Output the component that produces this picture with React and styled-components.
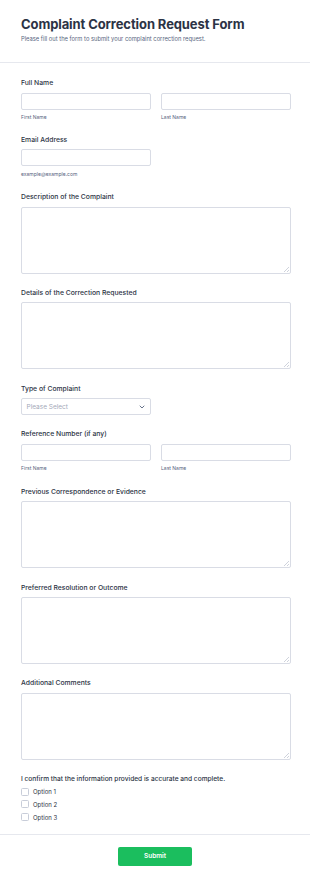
import React from "react";
import styled, { createGlobalStyle } from "styled-components";

const Global = createGlobalStyle`
  html, body { margin: 0; padding: 0; background: #fff; }
  body { font-family: Inter, "Noto Sans", "Liberation Sans", sans-serif; color: #2c3345; }
  * { box-sizing: border-box; }
`;

const Page = styled.div`
  width: 310px;
  min-height: 884px;
  background: #fff;
  display: flex;
  flex-direction: column;
`;

const Header = styled.header`
  padding: 16px 19px 19px 21px;
  border-bottom: 1px solid #e6e8ee;
`;

const Title = styled.h1`
  margin: 0;
  font-size: 13px;
  line-height: 17px;
  font-weight: 700;
  color: #2c3345;
  letter-spacing: -0.1px;
`;

const Subtitle = styled.p`
  margin: 2px 0 0;
  font-size: 5.8px;
  line-height: 8px;
  color: #57647e;
`;

const Body = styled.form`
  padding: 15px 19px 10px 21px;
  display: flex;
  flex-direction: column;
  gap: 14.3px;
  border-bottom: 1px solid #e6e8ee;
`;

const Field = styled.div`
  display: flex;
  flex-direction: column;
`;

const Label = styled.label`
  font-size: 6.8px;
  line-height: 10px;
  font-weight: 500;
  color: #2c3345;
  margin-bottom: ${(p) => (p.$tight ? 4 : 4.5)}px;
`;

const Row = styled.div`
  display: grid;
  grid-template-columns: 1fr 1fr;
  column-gap: 10px;
`;

const Col = styled.div`
  display: flex;
  flex-direction: column;
`;

const Input = styled.input`
  width: ${(p) => p.$w || "100%"};
  height: 17px;
  border: 1px solid #d9dce5;
  border-radius: 2px;
  background: #fff;
  padding: 0 4px;
  font: inherit;
  font-size: 7px;
  outline: none;
`;

const SubLabel = styled.span`
  margin-top: 4.5px;
  font-size: 5px;
  line-height: 7px;
  color: #57647e;
`;

const TextArea = styled.textarea`
  width: 100%;
  height: 67px;
  border: 1px solid #d9dce5;
  border-radius: 2px;
  background: #fff;
  resize: vertical;
  font: inherit;
  font-size: 7px;
  outline: none;
  display: block;

  &::-webkit-resizer {
    background: linear-gradient(
        135deg,
        transparent 0 45%,
        #cfd3dc 45% 58%,
        transparent 58% 72%,
        #cfd3dc 72% 85%,
        transparent 85%
      )
      no-repeat right 1px bottom 1px / 5px 5px;
  }
`;

const Select = styled.div`
  width: 130px;
  height: 17px;
  border: 1px solid #d9dce5;
  border-radius: 2px;
  display: flex;
  align-items: center;
  justify-content: space-between;
  padding: 0 5px 0 4.5px;
  font-size: 6.5px;
  color: #a3a9b9;
`;

const Checks = styled.div`
  display: flex;
  flex-direction: column;
  margin-top: 1px;
`;

const Check = styled.label`
  display: flex;
  align-items: center;
  gap: 4px;
  height: 12.8px;
  font-size: 6px;
  color: #2c3345;
`;

const Box = styled.span`
  width: 8px;
  height: 8px;
  border: 1px solid #c8cdd9;
  border-radius: 1.5px;
  background: #fff;
`;

const ConfirmLabel = styled(Label)`
  font-weight: 500;
  font-size: 6.6px;
  margin-bottom: 0;
`;

const Footer = styled.div`
  display: flex;
  justify-content: center;
  padding-top: 12px;
`;

const Submit = styled.button`
  width: 74px;
  height: 19.5px;
  border: none;
  border-radius: 2px;
  background: #1bbe5e;
  color: #fff;
  font-family: inherit;
  font-size: 6.5px;
  font-weight: 600;
`;

function NameField({ label }) {
  return (
    <Field>
      <Label>{label}</Label>
      <Row>
        <Col>
          <Input />
          <SubLabel>First Name</SubLabel>
        </Col>
        <Col>
          <Input />
          <SubLabel>Last Name</SubLabel>
        </Col>
      </Row>
    </Field>
  );
}

function AreaField({ label }) {
  return (
    <Field>
      <Label>{label}</Label>
      <TextArea />
    </Field>
  );
}

export default function App() {
  return (
    <Page>
      <Global />
      <Header>
        <Title>Complaint Correction Request Form</Title>
        <Subtitle>Please fill out the form to submit your complaint correction request.</Subtitle>
      </Header>
      <Body onSubmit={(e) => e.preventDefault()}>
        <NameField label="Full Name" />
        <Field>
          <Label $tight>Email Address</Label>
          <Input $w="130px" />
          <SubLabel>example@example.com</SubLabel>
        </Field>
        <AreaField label="Description of the Complaint" />
        <AreaField label="Details of the Correction Requested" />
        <Field>
          <Label>Type of Complaint</Label>
          <Select>
            <span>Please Select</span>
            <svg width="6" height="4" viewBox="0 0 6 4" fill="none">
              <path d="M1 1l2 2 2-2" stroke="#57647e" strokeWidth="0.9" strokeLinecap="round" strokeLinejoin="round" />
            </svg>
          </Select>
        </Field>
        <NameField label="Reference Number (if any)" />
        <AreaField label="Previous Correspondence or Evidence" />
        <AreaField label="Preferred Resolution or Outcome" />
        <AreaField label="Additional Comments" />
        <Field>
          <ConfirmLabel>I confirm that the information provided is accurate and complete.</ConfirmLabel>
          <Checks>
            {["Option 1", "Option 2", "Option 3"].map((o) => (
              <Check key={o}>
                <Box />
                {o}
              </Check>
            ))}
          </Checks>
        </Field>
      </Body>
      <Footer>
        <Submit type="button">Submit</Submit>
      </Footer>
    </Page>
  );
}
